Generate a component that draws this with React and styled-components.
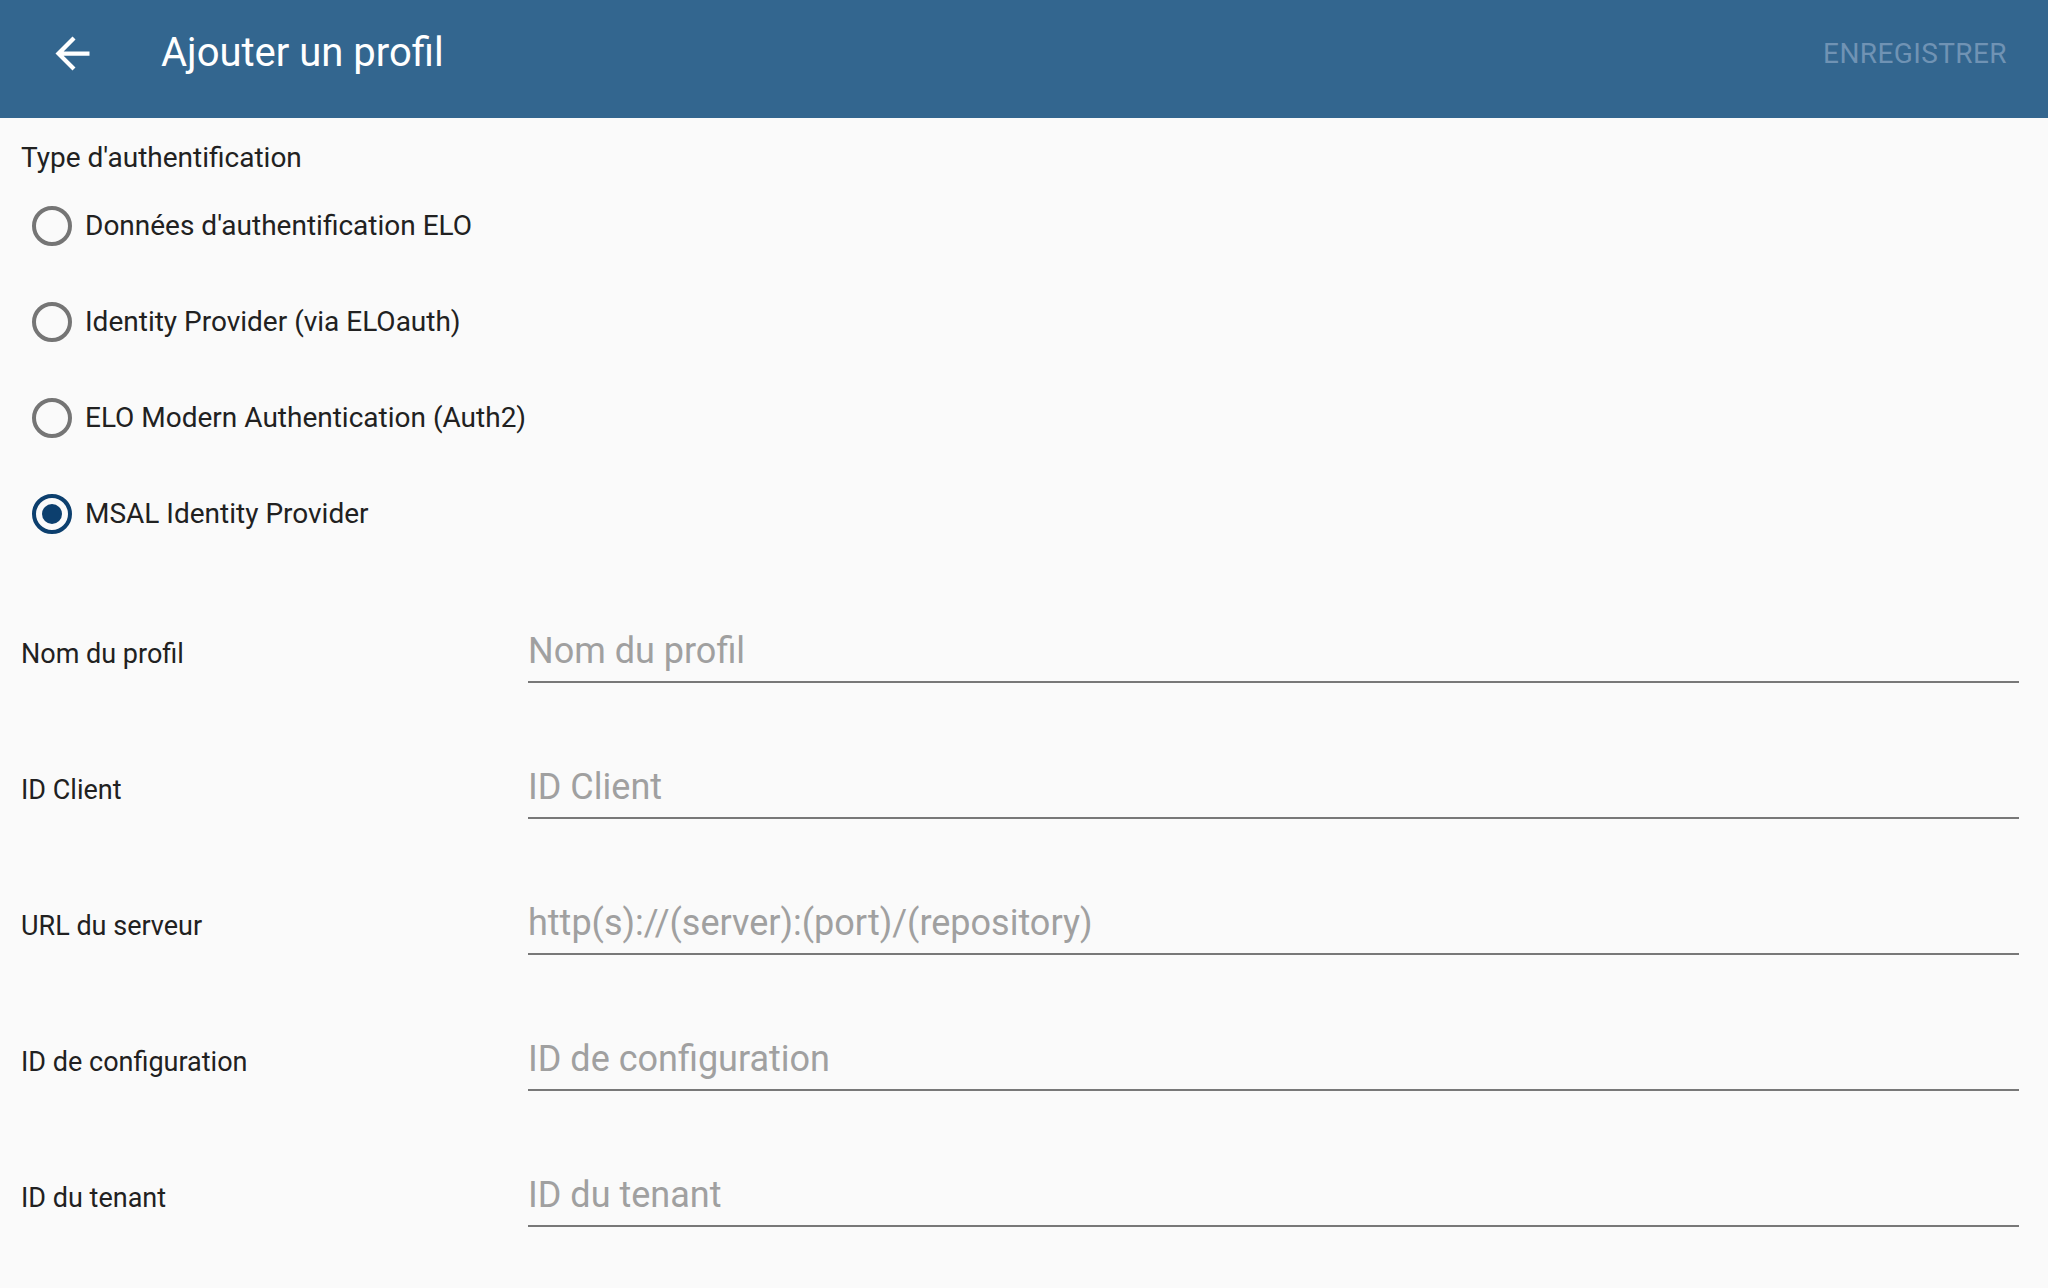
import React, { useState } from "react";
import styled, { createGlobalStyle } from "styled-components";

const authTypes = [
  "Données d'authentification ELO",
  "Identity Provider (via ELOauth)",
  "ELO Modern Authentication (Auth2)",
  "MSAL Identity Provider",
];

const fields = [
  { label: "Nom du profil", placeholder: "Nom du profil" },
  { label: "ID Client", placeholder: "ID Client" },
  { label: "URL du serveur", placeholder: "http(s)://(server):(port)/(repository)" },
  { label: "ID de configuration", placeholder: "ID de configuration" },
  { label: "ID du tenant", placeholder: "ID du tenant" },
];

const ArrowBack = () => (
  <svg viewBox="0 0 24 24" width="51" height="51" fill="#ffffff">
    <path d="M20 11H7.83l5.59-5.59L12 4l-8 8 8 8 1.41-1.41L7.83 13H20v-2z" />
  </svg>
);

const App = () => {
  const [selected, setSelected] = useState(3);
  const [values, setValues] = useState({});

  return (
    <>
      <GlobalStyle />
      <Page>
        <Toolbar>
          <BackButton aria-label="Retour">
            <ArrowBack />
          </BackButton>
          <Title>Ajouter un profil</Title>
          <SaveButton disabled>ENREGISTRER</SaveButton>
        </Toolbar>

        <Content>
          <SectionLabel>Type d'authentification</SectionLabel>
          <RadioGroup>
            {authTypes.map((type, index) => (
              <RadioRow key={type} onClick={() => setSelected(index)}>
                <RadioCircle checked={selected === index} />
                <RadioText>{type}</RadioText>
              </RadioRow>
            ))}
          </RadioGroup>

          <FieldList>
            {fields.map((field) => (
              <FieldRow key={field.label}>
                <FieldLabel>{field.label}</FieldLabel>
                <FieldInput
                  type="text"
                  placeholder={field.placeholder}
                  value={values[field.label] || ""}
                  onChange={(e) => setValues({ ...values, [field.label]: e.target.value })}
                />
              </FieldRow>
            ))}
          </FieldList>
        </Content>
      </Page>
    </>
  );
};

export default App;

const GlobalStyle = createGlobalStyle`
  html, body {
    margin: 0;
    padding: 0;
    background: #fafafa;
  }
  body {
    font-family: Roboto, "Noto Sans", "Liberation Sans", sans-serif;
    color: #212121;
  }
  * {
    box-sizing: border-box;
  }
`;

const Page = styled.div`
  width: 100%;
  min-height: 1288px;
  background: #fafafa;
`;

// Toolbar
const Toolbar = styled.header`
  height: 118px;
  background: #33668f;
  display: flex;
  align-items: center;
  padding: 0 41px 12px 47px;
`;

const BackButton = styled.button`
  width: 51px;
  height: 51px;
  padding: 0;
  border: none;
  background: transparent;
  display: flex;
  align-items: center;
  justify-content: center;
  cursor: pointer;
  margin-right: 63px;
`;

const Title = styled.h1`
  margin: 0;
  font-size: 40px;
  line-height: 48px;
  font-weight: 400;
  color: #ffffff;
`;

const SaveButton = styled.button`
  margin-left: auto;
  padding: 0;
  border: none;
  background: transparent;
  font-family: inherit;
  font-size: 28px;
  letter-spacing: 0.4px;
  color: #7093b4;
  cursor: default;
`;

// Content
const Content = styled.main`
  padding: 20px 29px 40px 21px;
`;

const SectionLabel = styled.div`
  font-size: 28px;
  line-height: 40px;
`;

const RadioGroup = styled.div`
  display: flex;
  flex-direction: column;
`;

const RadioRow = styled.label`
  height: 96px;
  display: flex;
  align-items: center;
  gap: 13px;
  padding-left: 11px;
  cursor: pointer;
`;

const RadioCircle = styled.span`
  position: relative;
  width: 40px;
  height: 40px;
  flex: 0 0 40px;
  border-radius: 50%;
  border: 4px solid ${({ checked }) => (checked ? "#0c3f6e" : "#757575")};

  &::after {
    content: "";
    display: ${({ checked }) => (checked ? "block" : "none")};
    position: absolute;
    left: 50%;
    top: 50%;
    width: 20px;
    height: 20px;
    margin: -10px 0 0 -10px;
    border-radius: 50%;
    background: #0c3f6e;
  }
`;

const RadioText = styled.span`
  font-size: 28px;
  line-height: 40px;
  color: #212121;
`;

const FieldList = styled.div`
  margin-top: 59px;
  display: flex;
  flex-direction: column;
  gap: 74px;
`;

const FieldRow = styled.div`
  display: grid;
  grid-template-columns: 507px 1fr;
  align-items: baseline;
`;

const FieldLabel = styled.div`
  font-size: 27px;
  color: #212121;
`;

const FieldInput = styled.input`
  width: 100%;
  height: 62px;
  padding: 2px 0 2px;
  border: none;
  border-bottom: 2px solid #787878;
  border-radius: 0;
  background: transparent;
  font-family: inherit;
  font-size: 36px;
  color: #212121;
  outline: none;

  &::placeholder {
    color: #a0a0a0;
  }
`;
